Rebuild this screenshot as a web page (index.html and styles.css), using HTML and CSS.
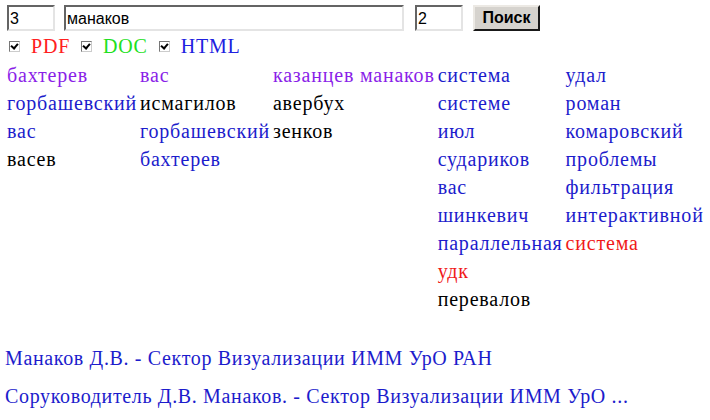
FILE: index.html
```html
<!DOCTYPE html>
<html lang="ru">
<head>
    <meta charset="UTF-8">
    <title>Поиск</title>
    <link rel="stylesheet" href="styles.css">
</head>
<body>
    <form class="search-bar">
        <input class="field field-small" type="text" value="3">
        <input class="field field-query" type="text" value="манаков">
        <input class="field field-small field-pages" type="text" value="2">
        <button class="search-button" type="button">Поиск</button>
    </form>
    <div class="filters">
        <label class="filter"><span class="check"></span><span class="pdf">PDF</span></label>
        <label class="filter"><span class="check"></span><span class="doc">DOC</span></label>
        <label class="filter"><span class="check"></span><span class="html">HTML</span></label>
    </div>

    <div class="words">
        <div class="word-col">
            <span class="w purple">бахтерев</span>
            <span class="w blue">горбашевский</span>
            <span class="w blue">вас</span>
            <span class="w black">васев</span>
        </div>
        <div class="word-col">
            <span class="w purple">вас</span>
            <span class="w black">исмагилов</span>
            <span class="w blue">горбашевский</span>
            <span class="w blue">бахтерев</span>
        </div>
        <div class="word-col">
            <span class="w purple">казанцев манаков</span>
            <span class="w black">авербух</span>
            <span class="w black">зенков</span>
        </div>
        <div class="word-col">
            <span class="w blue">система</span>
            <span class="w blue">системе</span>
            <span class="w blue">июл</span>
            <span class="w blue">судариков</span>
            <span class="w blue">вас</span>
            <span class="w blue">шинкевич</span>
            <span class="w blue">параллельная</span>
            <span class="w red">удк</span>
            <span class="w black">перевалов</span>
        </div>
        <div class="word-col">
            <span class="w blue">удал</span>
            <span class="w blue">роман</span>
            <span class="w blue">комаровский</span>
            <span class="w blue">проблемы</span>
            <span class="w blue">фильтрация</span>
            <span class="w blue">интерактивной</span>
            <span class="w red">система</span>
        </div>
    </div>

    <div class="results">
        <a class="result" href="#">Манаков Д.В. - Сектор Визуализации ИММ УрО РАН</a>
        <a class="result" href="#">Соруководитель Д.В. Манаков. - Сектор Визуализации ИММ УрО ...</a>
    </div>
</body>
</html>
```

FILE: styles.css
```css
body {
    margin: 0;
    padding: 5px 7px;
    background: #fff;
    font-family: 'Liberation Serif', 'Times New Roman', serif;
    font-size: 20px;
    color: #000;
}

.search-bar {
    display: flex;
    align-items: center;
    margin: 0;
}

.field {
    box-sizing: border-box;
    height: 26px;
    padding: 2px 1px 0;
    border: 2px inset #b8b8b8;
    border-right-color: #e4e4e4;
    border-bottom-color: #e4e4e4;
    font-family: 'Liberation Sans', Arial, sans-serif;
    font-size: 16px;
    color: #000;
    background: #fff;
}

.field-small {
    width: 48px;
}

.field-query {
    width: 340px;
    margin-left: 9px;
}

.field-pages {
    margin-left: 11px;
}

.search-button {
    box-sizing: border-box;
    height: 26px;
    width: 67px;
    margin-left: 10px;
    padding: 0;
    background: #d6d3ce;
    border: 2px outset #ece9e4;
    border-right-color: #6e6e6e;
    border-bottom-color: #6e6e6e;
    font-family: 'Liberation Sans', Arial, sans-serif;
    font-size: 16px;
    font-weight: bold;
    color: #000;
}

.filters {
    display: flex;
    gap: 11px;
    margin-top: 5px;
    padding-left: 2px;
    height: 20px;
    align-items: center;
    letter-spacing: 0.8px;
}

.filter {
    display: flex;
    align-items: center;
}

.check {
    position: relative;
    width: 9px;
    height: 9px;
    margin-right: 11px;
    border: 1px solid #777;
    border-right-color: #ccc;
    border-bottom-color: #ccc;
    background: #fff;
}

.check::after {
    content: "";
    position: absolute;
    left: 2px;
    top: 0;
    width: 3px;
    height: 5px;
    border: solid #000;
    border-width: 0 2px 2px 0;
    transform: rotate(40deg);
}

.pdf { color: #ff2020; }
.doc { color: #20e020; }
.html { color: #2020e0; }

.words {
    display: flex;
    margin-top: 5px;
    letter-spacing: 0.8px;
}

.word-col {
    display: flex;
    flex-direction: column;
    padding-right: 3px;
}

.w {
    height: 28px;
    line-height: 28px;
    white-space: nowrap;
}

.purple { color: #8a1ee8; }
.blue { color: #1c1ccc; }
.black { color: #000; }
.red { color: #f01818; }

.results {
    display: flex;
    flex-direction: column;
    margin-top: 34px;
    gap: 15px;
    margin-left: -2px;
    letter-spacing: 0.65px;
}

.result {
    color: #1c1ccc;
    text-decoration: none;
    line-height: 23px;
}
```
